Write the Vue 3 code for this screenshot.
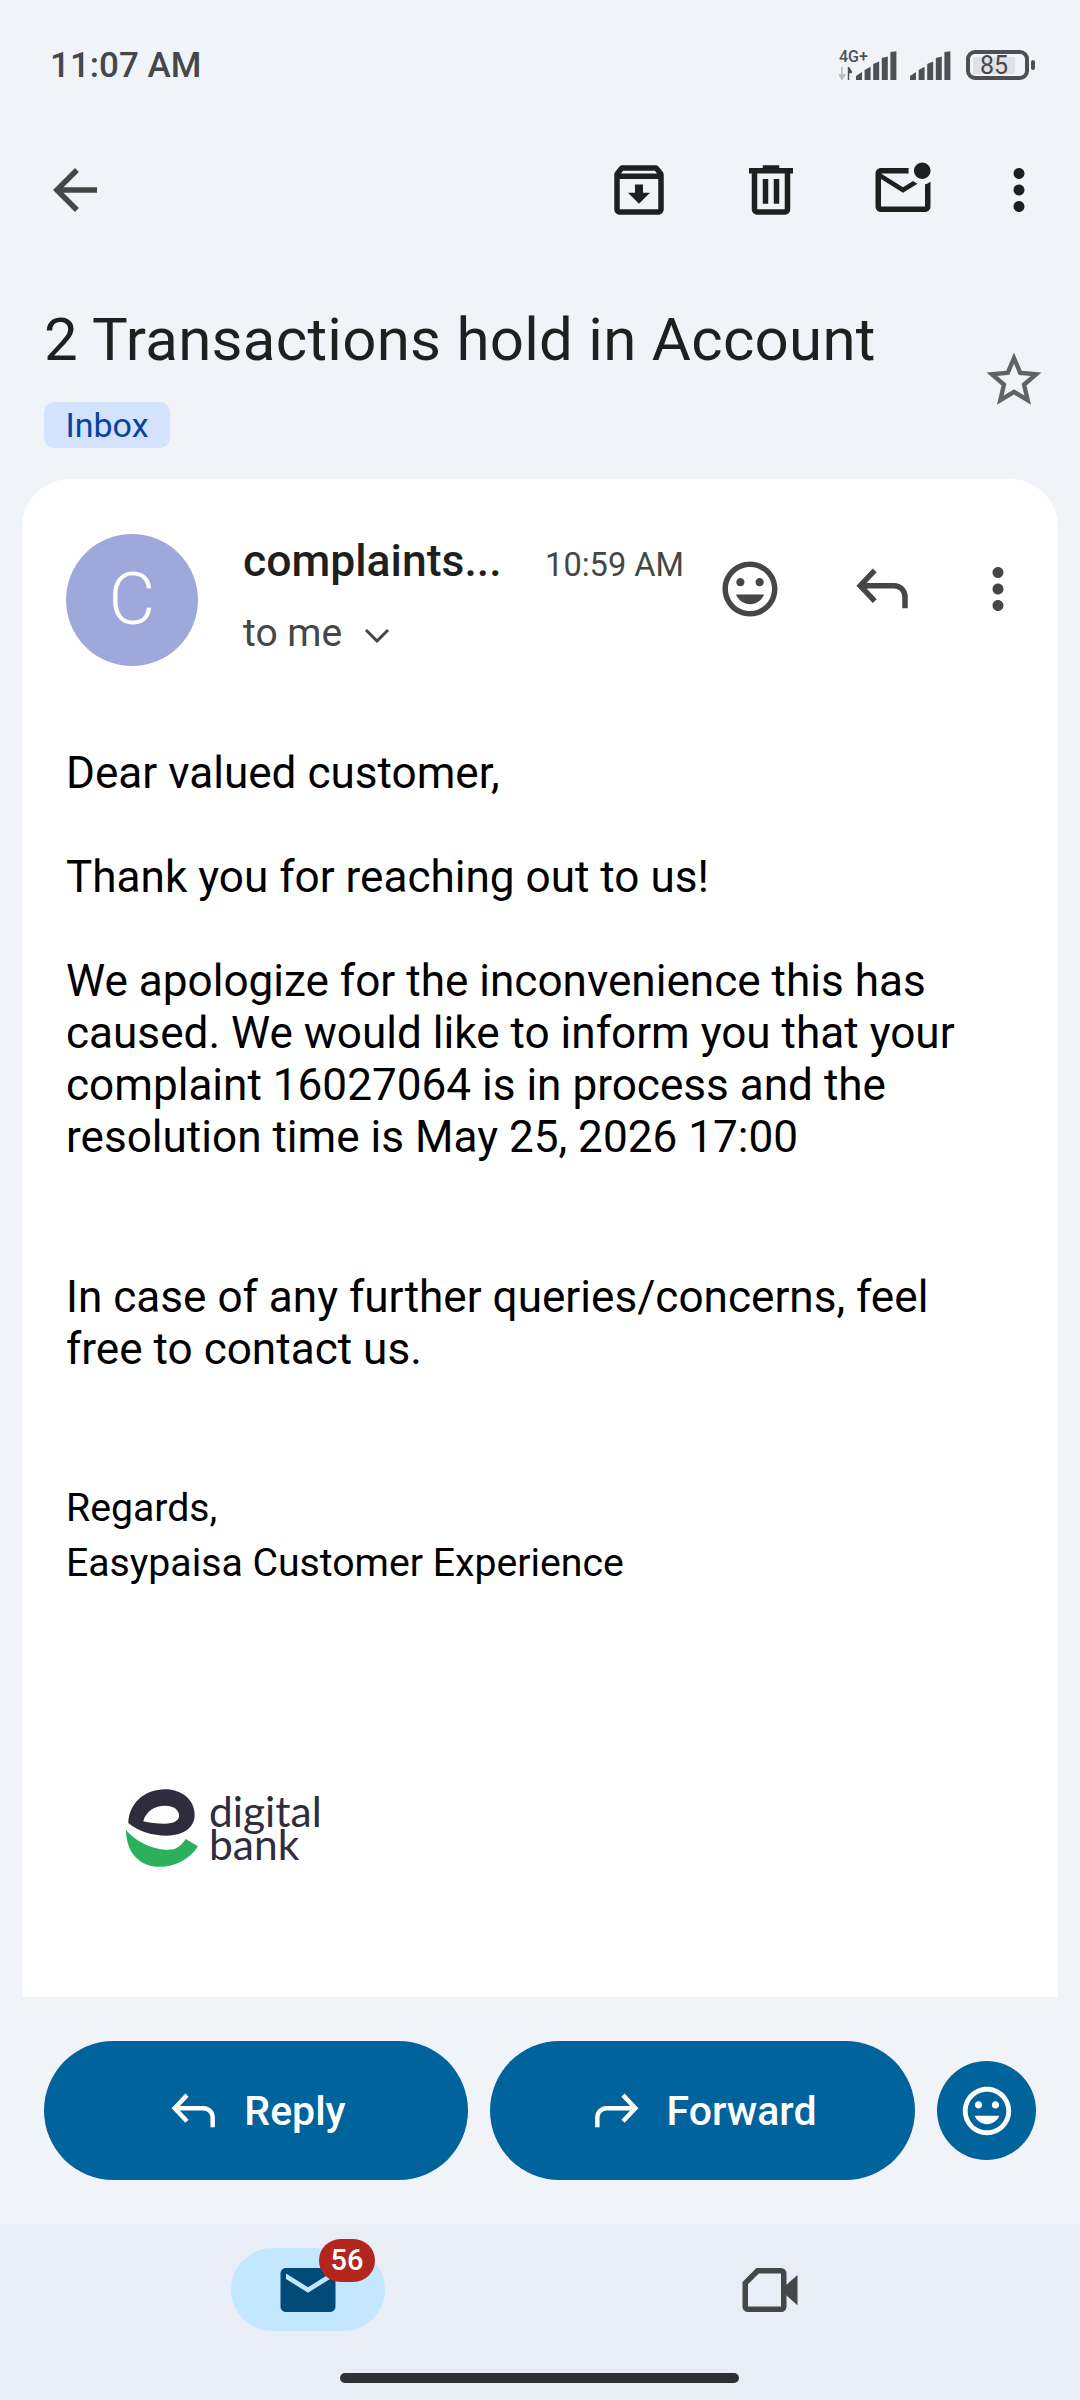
<script setup>
const iconPaths = {
  back: 'M20 11H7.83l5.59-5.59L12 4l-8 8 8 8 1.41-1.41L7.83 13H20v-2z',
  archive: 'M20.54 5.23l-1.39-1.68C18.88 3.21 18.47 3 18 3H6c-.47 0-.88.21-1.16.55L3.46 5.23C3.17 5.57 3 6.02 3 6.5V19c0 1.1.9 2 2 2h14c1.1 0 2-.9 2-2V6.5c0-.48-.17-.93-.46-1.27zM6.24 5h11.52l.81.97H5.44l.8-.97zM5 19V8h14v11H5zm8.45-9h-2.9v3H8l4 4 4-4h-2.55z',
  trash: 'M15 4V3H9v1H4v2h1v13c0 1.1.9 2 2 2h10c1.1 0 2-.9 2-2V6h1V4h-5zm2 15H7V6h10v13zM9 8h2v9H9zm4 0h2v9h-2z',
  unread: 'M22 8.98V18c0 1.1-.9 2-2 2H4c-1.1 0-2-.9-2-2V6c0-1.1.9-2 2-2h10.1c-.06.32-.1.66-.1 1s.04.68.1 1H4l8 5 3.67-2.29c.47.43 1.02.76 1.63.98L12 13 4 8v10h16V9.9c.74-.15 1.42-.48 2-.92zM16 5c0 1.66 1.34 3 3 3s3-1.34 3-3-1.34-3-3-3-3 1.34-3 3z',
  dots: 'M12 8c1.1 0 2-.9 2-2s-.9-2-2-2-2 .9-2 2 .9 2 2 2zm0 2c-1.1 0-2 .9-2 2s.9 2 2 2 2-.9 2-2-.9-2-2-2zm0 6c-1.1 0-2 .9-2 2s.9 2 2 2 2-.9 2-2-.9-2-2-2z',
  star: 'M22 9.24l-7.19-.62L12 2 9.19 8.63 2 9.24l5.46 4.73L5.82 21 12 17.27 18.18 21l-1.63-7.03L22 9.24zM12 15.4l-3.76 2.27 1-4.28-3.32-2.88 4.38-.38L12 6.1l1.71 4.04 4.38.38-3.32 2.88 1 4.28L12 15.4z',
  mood: 'M11.99 2C6.47 2 2 6.48 2 12s4.47 10 9.99 10C17.52 22 22 17.52 22 12S17.52 2 11.99 2zM12 20c-4.42 0-8-3.58-8-8s3.58-8 8-8 8 3.58 8 8-3.58 8-8 8zm3.5-9c.83 0 1.5-.67 1.5-1.5S16.33 8 15.5 8 14 8.67 14 9.5s.67 1.5 1.5 1.5zm-7 0c.83 0 1.5-.67 1.5-1.5S9.33 8 8.5 8 7 8.67 7 9.5 7.67 11 8.5 11zm3.5 6.5c2.33 0 4.31-1.46 5.11-3.5H6.89c.8 2.04 2.78 3.5 5.11 3.5z',
  mail: 'M20 4H4c-1.1 0-2 .9-2 2v12c0 1.1.9 2 2 2h16c1.1 0 2-.9 2-2V6c0-1.1-.9-2-2-2zm0 4l-8 5-8-5V6l8 5 8-5v2z'
}
const bars = [0, 1, 2, 3, 4].map((i) => ({
  points: `${i * 8.6},29 ${i * 8.6},${25 - i * 6} ${i * 8.6 + 6},${21 - i * 5.2} ${i * 8.6 + 6},29`
}))
</script>

<template>
  <div class="page">
    <header class="status">
      <span class="clock">11:07 AM</span>
      <div class="status-icons">
        <div class="net">
          <span class="net-label">4G+</span>
          <svg class="net-arrows" viewBox="0 0 13 13" width="13" height="13">
            <path d="M3 0v8M0.5 8 3 12 5.500 8z" fill="#b9bcc0" stroke="#b9bcc0" stroke-width="1.600" />
            <path d="M9.500 13V3M9.500 0.500 13 5.500H9.500z" fill="#4d4f53" stroke="#4d4f53" stroke-width="1.400" />
          </svg>
        </div>
        <svg class="signal first" viewBox="0 0 41 29" width="41" height="29">
          <polygon v-for="(b, i) in bars" :key="i" :points="b.points" fill="#4d4f53" />
        </svg>
        <svg class="signal second" viewBox="0 0 41 29" width="41" height="29">
          <polygon v-for="(b, i) in bars" :key="i" :points="b.points" fill="#4d4f53" />
        </svg>
        <div class="battery"><span class="level">85</span></div>
        <span class="tip"></span>
      </div>
    </header>

    <nav class="toolbar">
      <svg class="icon back" viewBox="0 0 24 24"><path :d="iconPaths.back" /></svg>
      <div class="tools">
        <svg class="icon archive" viewBox="0 0 24 24"><path :d="iconPaths.archive" /></svg>
        <svg class="icon trash" viewBox="0 0 24 24"><path :d="iconPaths.trash" /></svg>
        <svg class="icon unread" viewBox="0 0 24 24"><path :d="iconPaths.unread" /></svg>
        <svg class="icon more" viewBox="0 0 24 24"><path :d="iconPaths.dots" /></svg>
      </div>
    </nav>

    <section class="subject">
      <div>
        <h1 class="title">2 Transactions hold in Account</h1>
        <span class="chip">Inbox</span>
      </div>
      <svg class="icon star" viewBox="0 0 24 24"><path :d="iconPaths.star" /></svg>
    </section>

    <main class="card">
      <div class="head">
        <div class="avatar">C</div>
        <div class="meta">
          <div class="meta-top">
            <span class="sender">complaints...</span>
            <span class="when">10:59 AM</span>
          </div>
          <div class="to">
            <span>to me</span>
            <svg class="chev" viewBox="0 0 26 16" width="26" height="16">
              <path d="M2 3l11 11L24 3" fill="none" stroke="#444746" stroke-width="3" />
            </svg>
          </div>
        </div>
        <div class="head-actions">
          <svg class="icon h-mood" viewBox="0 0 24 24"><path :d="iconPaths.mood" /></svg>
          <svg class="icon h-reply" viewBox="0 0 24 24">
            <path d="M9 5.200 3.700 10.800 9 16.400M3.700 10.800H16a4 4 0 0 1 4 4V19" class="line" />
          </svg>
          <svg class="icon h-more" viewBox="0 0 24 24"><path :d="iconPaths.dots" /></svg>
        </div>
      </div>

      <article class="body">
        <p>Dear valued customer,</p>
        <p class="gap-52">Thank you for reaching out to us!</p>
        <p class="gap-52">We apologize for the inconvenience this has caused. We would like to inform you that your complaint 16027064 is in process and the resolution time is May 25, 2026 17:00</p>
        <p class="gap-108">In case of any further queries/concerns, feel free to contact us.</p>
        <p class="sign">Regards,<br />Easypaisa Customer Experience</p>
      </article>

      <div class="logo">
        <svg class="mark" viewBox="78 88 217 234" width="72" height="78">
          <path fill="#2f2d3d" fill-rule="evenodd" d="M85 190C86 130 135 88 195 88c52 0 90 32 90 77 0 40-36 63-85 63-42 0-85-12-115-38zM130 185c18 5 40 7 65 7 27 0 43-10 43-24 0-18-16-30-43-30-30 0-57 17-65 47z" />
          <path fill="#2bb05c" d="M78 210c22 30 82 65 137 60 20-2 35-20 43-32l37 22c-25 40-70 62-115 62-60 0-102-42-102-112z" />
        </svg>
        <div class="wordmark">digital<br />bank</div>
      </div>
    </main>

    <section class="actions">
      <button class="pill">
        <svg class="btn-icon" viewBox="0 0 24 24"><path d="M9 5.200 3.700 10.800 9 16.400M3.700 10.800H16a4 4 0 0 1 4 4V19" class="line" /></svg>
        <span>Reply</span>
      </button>
      <button class="pill wide">
        <svg class="btn-icon" viewBox="0 0 24 24"><path d="M15 5.200 20.300 10.800 15 16.400M20.300 10.800H8a4 4 0 0 0-4 4V19" class="line" /></svg>
        <span>Forward</span>
      </button>
      <button class="round">
        <svg class="round-icon" viewBox="0 0 24 24"><path :d="iconPaths.mood" /></svg>
      </button>
    </section>

    <footer class="nav">
      <div class="tabs">
        <div class="tab-wrap">
          <div class="active-tab">
            <svg class="icon tab-mail" viewBox="0 0 24 24"><path :d="iconPaths.mail" /></svg>
            <span class="badge">56</span>
          </div>
        </div>
        <div class="tab-wrap">
          <svg class="icon tab-video" viewBox="0 0 24 24">
            <path d="M7.500 5H16a1 1 0 0 1 1 1v12a1 1 0 0 1-1 1H4a1 1 0 0 1-1-1V9.500z" fill="none" stroke="#444746" stroke-width="2" />
            <path d="M17.500 10.500 22 6.500v11l-4.500-4z" fill="#444746" />
          </svg>
        </div>
      </div>
      <div class="home-bar"></div>
    </footer>
  </div>
</template>

<style scoped>
.page {
  width: 1080px;
  height: 2400px;
  display: flex;
  flex-direction: column;
  background: #f0f4f9;
  font-family: Roboto, "Liberation Sans", sans-serif;
  color: #1f1f1f;
  overflow: hidden;
}
.status {
  height: 130px;
  flex: none;
  display: flex;
  align-items: center;
  justify-content: space-between;
  padding: 0 45px 0 50px;
  box-sizing: border-box;
}
.clock {
  font-size: 35px;
  font-weight: 500;
  color: #45474a;
}
.status-icons {
  display: flex;
  align-items: flex-end;
  height: 30px;
}
.net {
  width: 17px;
  height: 30px;
  display: flex;
  flex-direction: column;
  justify-content: space-between;
  overflow: visible;
  white-space: nowrap;
}
.net-label {
  font-size: 16px;
  line-height: 13px;
  font-weight: 500;
  color: #4d4f53;
}
.signal.first { margin-right: 13px; }
.signal.second { margin-right: 15px; }
.battery {
  width: 63px;
  height: 30px;
  box-sizing: border-box;
  border: 4px solid #4d4f53;
  border-radius: 9px;
  padding: 3px;
  display: flex;
}
.level {
  width: 42px;
  height: 17px;
  background: #dfe1e5;
  border-radius: 2px;
  font-size: 25px;
  line-height: 17px;
  text-align: center;
  color: #45474a;
}
.tip {
  width: 4px;
  height: 10px;
  background: #4d4f53;
  border-radius: 2px;
  margin: 0 0 10px 2px;
}
.icon {
  width: 66px;
  height: 66px;
  flex: none;
  display: block;
  fill: #1f1f1f;
}
.line {
  fill: none;
  stroke: currentColor;
  stroke-width: 2;
}
.toolbar {
  height: 120px;
  flex: none;
  display: flex;
  align-items: center;
  justify-content: space-between;
  padding: 0 28px 0 42px;
  box-sizing: border-box;
}
.back { fill: #444746; }
.tools {
  display: flex;
  gap: 66px;
}
.tools .more { margin-left: -16px; }
.subject {
  height: 229px;
  flex: none;
  display: flex;
  justify-content: space-between;
  padding: 50px 33px 0 44px;
  box-sizing: border-box;
}
.title {
  margin: 0;
  font-size: 60px;
  line-height: 80px;
  font-weight: 400;
  letter-spacing: 0.27px;
  white-space: nowrap;
}
.chip {
  display: block;
  width: 126px;
  height: 46px;
  margin-top: 22px;
  background: #d3e3fd;
  border-radius: 10px;
  font-size: 34px;
  line-height: 46px;
  text-align: center;
  color: #0842a0;
}
.star {
  margin-top: 47px;
  fill: #5f6368;
}
.card {
  height: 1518px;
  flex: none;
  margin: 0 22px;
  box-sizing: border-box;
  background: #fff;
  border-radius: 48px 48px 0 0;
  padding: 55px 0 0 44px;
}
.head { display: flex; height: 132px; }
.avatar {
  width: 132px;
  height: 132px;
  flex: none;
  border-radius: 50%;
  background: #9fa8da;
  color: #fff;
  font-size: 72px;
  font-weight: 300;
  line-height: 132px;
  text-align: center;
}
.meta { margin-left: 45px; width: 441px; flex: none; }
.meta-top {
  display: flex;
  align-items: baseline;
  justify-content: space-between;
  height: 50px;
  margin-top: 2px;
}
.sender {
  font-size: 44.5px;
  line-height: 50px;
  font-weight: 500;
  white-space: nowrap;
}
.when {
  font-size: 32.6px;
  color: #444746;
}
.to {
  display: flex;
  align-items: center;
  gap: 22px;
  margin-top: 25px;
  height: 44px;
  font-size: 39px;
  color: #444746;
}
.chev { margin-top: 4px; }
.head-actions {
  display: flex;
  align-items: flex-start;
  margin-left: 33px;
  margin-top: 22px;
  color: #444746;
}
.head-actions .icon { fill: #444746; }
.h-reply { margin-left: 67px; }
.h-more { margin-left: 49px; }
.body {
  margin-top: 81px;
  width: 920px;
  font-size: 44.1px;
  line-height: 52px;
  color: #000;
}
.body p { margin: 0; }
.body .gap-52 { margin-top: 52px; }
.body .gap-108 { margin-top: 108px; }
.body .sign {
  margin-top: 106px;
  font-size: 39.2px;
  line-height: 55px;
}
.logo {
  display: flex;
  margin: 198px 0 0 60px;
}
.wordmark {
  margin: 5px 0 0 11px;
  font-family: Lato, Inter, sans-serif;
  font-size: 42.5px;
  line-height: 33px;
  color: #2f2d3d;
}
.actions {
  height: 227px;
  flex: none;
  box-sizing: border-box;
  padding: 44px 44px 0;
  display: flex;
  gap: 22px;
  align-items: flex-start;
}
.pill {
  width: 424px;
  height: 139px;
  flex: none;
  border: 0;
  border-radius: 70px;
  background: #00639b;
  color: #fff;
  display: flex;
  align-items: center;
  justify-content: center;
  gap: 22px;
  font-family: inherit;
  font-size: 41px;
  font-weight: 500;
  padding: 0;
}
.pill.wide { width: 425px; }
.btn-icon { width: 56px; height: 56px; }
.btn-icon .line { stroke-width: 1.9; }
.round {
  width: 99px;
  height: 99px;
  flex: none;
  border: 0;
  padding: 0;
  margin-top: 20px;
  border-radius: 50%;
  background: #00639b;
  display: flex;
  align-items: center;
  justify-content: center;
}
.round-icon { width: 58px; height: 58px; fill: #fff; }
.nav {
  flex: 1;
  background: #e9eef6;
  padding-top: 24px;
  box-sizing: border-box;
}
.tabs {
  display: grid;
  grid-template-columns: 464px 460px;
  padding: 0 76px;
}
.tab-wrap {
  height: 83px;
  display: flex;
  align-items: center;
  justify-content: center;
}
.active-tab {
  position: relative;
  width: 154px;
  height: 83px;
  border-radius: 42px;
  background: #c2e7ff;
  display: flex;
  align-items: center;
  justify-content: center;
}
.tab-mail { fill: #004a77; }
.badge {
  position: absolute;
  left: 88px;
  top: -9px;
  width: 56px;
  height: 43px;
  border-radius: 22px;
  background: #b3261e;
  color: #fff;
  font-size: 29px;
  font-weight: 500;
  line-height: 43px;
  text-align: center;
}
.home-bar {
  width: 399px;
  height: 10px;
  margin: 42px 0 0 340px;
  background: #2f3033;
  border-radius: 5px;
}
</style>

<style>
html, body { margin: 0; padding: 0; }
</style>
